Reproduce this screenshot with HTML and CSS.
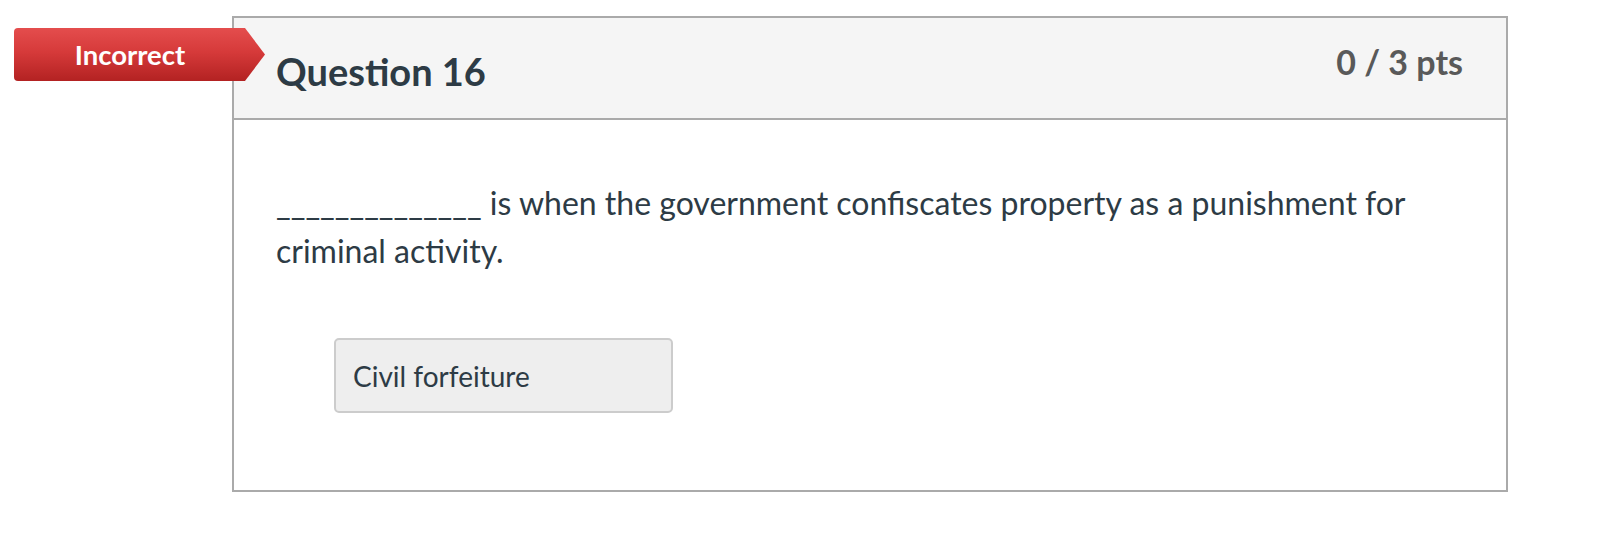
FILE: index.html
```html
<!DOCTYPE html>
<html lang="en">
<head>
<meta charset="utf-8">
<title>Question 16</title>
<link rel="stylesheet" href="styles.css">
</head>
<body>
<div class="page">
  <div class="question">
    <div class="badge"><span class="badge-text">Incorrect</span></div>
    <div class="q-header">
      <h2 class="q-title">Question 16</h2>
      <div class="q-points">0 / 3 pts</div>
    </div>
    <div class="q-body">
      <p class="q-text">______________ is when the government confiscates property as a punishment for criminal activity.</p>
      <div class="answer">Civil forfeiture</div>
    </div>
  </div>
</div>
</body>
</html>
```

FILE: styles.css
```css
html, body {
  margin: 0;
  padding: 0;
  background: #ffffff;
}

body {
  font-family: Lato, "Open Sans", "Liberation Sans", sans-serif;
  color: #2d3b45;
}

.page {
  padding: 16px 0 0 232px;
}

.question {
  position: relative;
  width: 1272px;
  border: 2px solid #aaaaaa;
  background: #ffffff;
}

.badge {
  position: absolute;
  left: -220px;
  top: 10px;
  width: 251px;
  height: 53px;
  box-sizing: border-box;
  padding-left: 1px;
  padding-right: 20px;
  display: flex;
  align-items: center;
  justify-content: center;
  background: linear-gradient(#e44d4d 0%, #d63a3a 45%, #b32222 100%);
  border-radius: 4px 0 0 4px;
  clip-path: polygon(0 0, 231px 0, 251px 50%, 231px 100%, 0 100%);
  z-index: 2;
}

.badge-text {
  color: #ffffff;
  font-weight: 700;
  font-size: 27.5px;
  line-height: 33px;
}

.q-header {
  display: flex;
  justify-content: space-between;
  align-items: flex-start;
  height: 102px;
  box-sizing: border-box;
  padding: 0 43px 0 42px;
  background: #f5f5f5;
  border-bottom: 2px solid #aaaaaa;
}

.q-title {
  margin: 30px 0 0 0;
  font-size: 38px;
  font-weight: 700;
  line-height: 46px;
  color: #2d3b45;
}

.q-points {
  margin-top: 23px;
  font-size: 34px;
  font-weight: 700;
  line-height: 41px;
  color: #595959;
}

.q-body {
  padding: 59px 42px 77px 42px;
  display: flex;
  flex-direction: column;
  align-items: flex-start;
}

.q-text {
  margin: 0;
  font-size: 32px;
  line-height: 48px;
  color: #2d3b45;
  max-width: 1150px;
}

.answer {
  margin: 63px 0 0 58px;
  width: 339px;
  height: 75px;
  box-sizing: border-box;
  padding-left: 17px;
  display: flex;
  align-items: center;
  background: #eeeeee;
  border: 2px solid #cccccc;
  border-radius: 5px;
  font-size: 28px;
  line-height: 34px;
  color: #2d3b45;
}
```
